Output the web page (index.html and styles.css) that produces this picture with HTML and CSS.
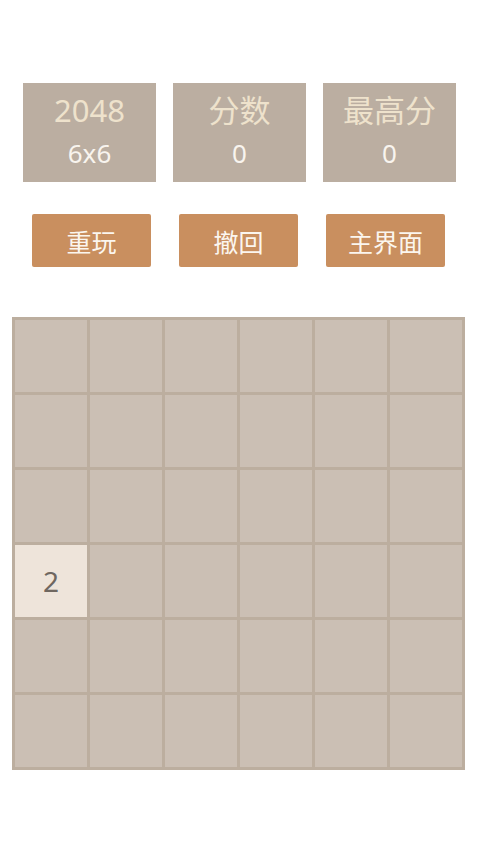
FILE: index.html
```html
<!DOCTYPE html>
<html lang="zh">
<head>
<meta charset="utf-8">
<link rel="stylesheet" href="styles.css">
</head>
<body>
<div class="page">
  <div class="scores">
    <div class="score-box"><div class="label">2048</div><div class="value">6x6</div></div>
    <div class="score-box"><div class="label">分数</div><div class="value">0</div></div>
    <div class="score-box"><div class="label">最高分</div><div class="value">0</div></div>
  </div>
  <div class="actions">
    <div class="btn">重玩</div>
    <div class="btn">撤回</div>
    <div class="btn">主界面</div>
  </div>
  <div class="board">
    <div class="cell"></div><div class="cell"></div><div class="cell"></div><div class="cell"></div><div class="cell"></div><div class="cell"></div>
    <div class="cell"></div><div class="cell"></div><div class="cell"></div><div class="cell"></div><div class="cell"></div><div class="cell"></div>
    <div class="cell"></div><div class="cell"></div><div class="cell"></div><div class="cell"></div><div class="cell"></div><div class="cell"></div>
    <div class="cell tile-2">2</div><div class="cell"></div><div class="cell"></div><div class="cell"></div><div class="cell"></div><div class="cell"></div>
    <div class="cell"></div><div class="cell"></div><div class="cell"></div><div class="cell"></div><div class="cell"></div><div class="cell"></div>
    <div class="cell"></div><div class="cell"></div><div class="cell"></div><div class="cell"></div><div class="cell"></div><div class="cell"></div>
  </div>
</div>
</body>
</html>
```
FILE: styles.css
```css
html, body {
  margin: 0;
  padding: 0;
  background: #ffffff;
  font-family: "Noto Sans", "Noto Sans CJK SC", sans-serif;
}
.page {
  width: 478px;
  height: 850px;
  display: flex;
  flex-direction: column;
}
.scores {
  display: flex;
  gap: 17px;
  padding: 83px 0 0 23px;
}
.score-box {
  width: 133px;
  height: 99px;
  box-sizing: border-box;
  padding-bottom: 6px;
  background: #bbaea1;
  display: flex;
  flex-direction: column;
  align-items: center;
  justify-content: center;
}
.label {
  color: #eee2cc;
  font-size: 31px;
  line-height: 40px;
}
.value {
  color: #f8f4ee;
  font-size: 26px;
  line-height: 34px;
  margin-top: 6px;
}
.actions {
  display: flex;
  gap: 28px;
  padding: 32px 0 0 32px;
}
.btn {
  width: 119px;
  height: 53px;
  background: #c98f5f;
  border-radius: 2px;
  color: #fbf6ef;
  font-size: 25px;
  display: flex;
  align-items: center;
  justify-content: center;
}
.board {
  margin: 50px 0 0 12px;
  width: 453px;
  height: 453px;
  box-sizing: border-box;
  padding: 3px;
  background: #bcae9f;
  display: grid;
  grid-template-columns: repeat(6, 72px);
  grid-template-rows: repeat(6, 72px);
  gap: 3px;
}
.cell {
  background: #cbbfb4;
  display: flex;
  align-items: center;
  justify-content: center;
}
.tile-2 {
  background: #eee4da;
  color: #6f6760;
  font-size: 28px;
}
```
